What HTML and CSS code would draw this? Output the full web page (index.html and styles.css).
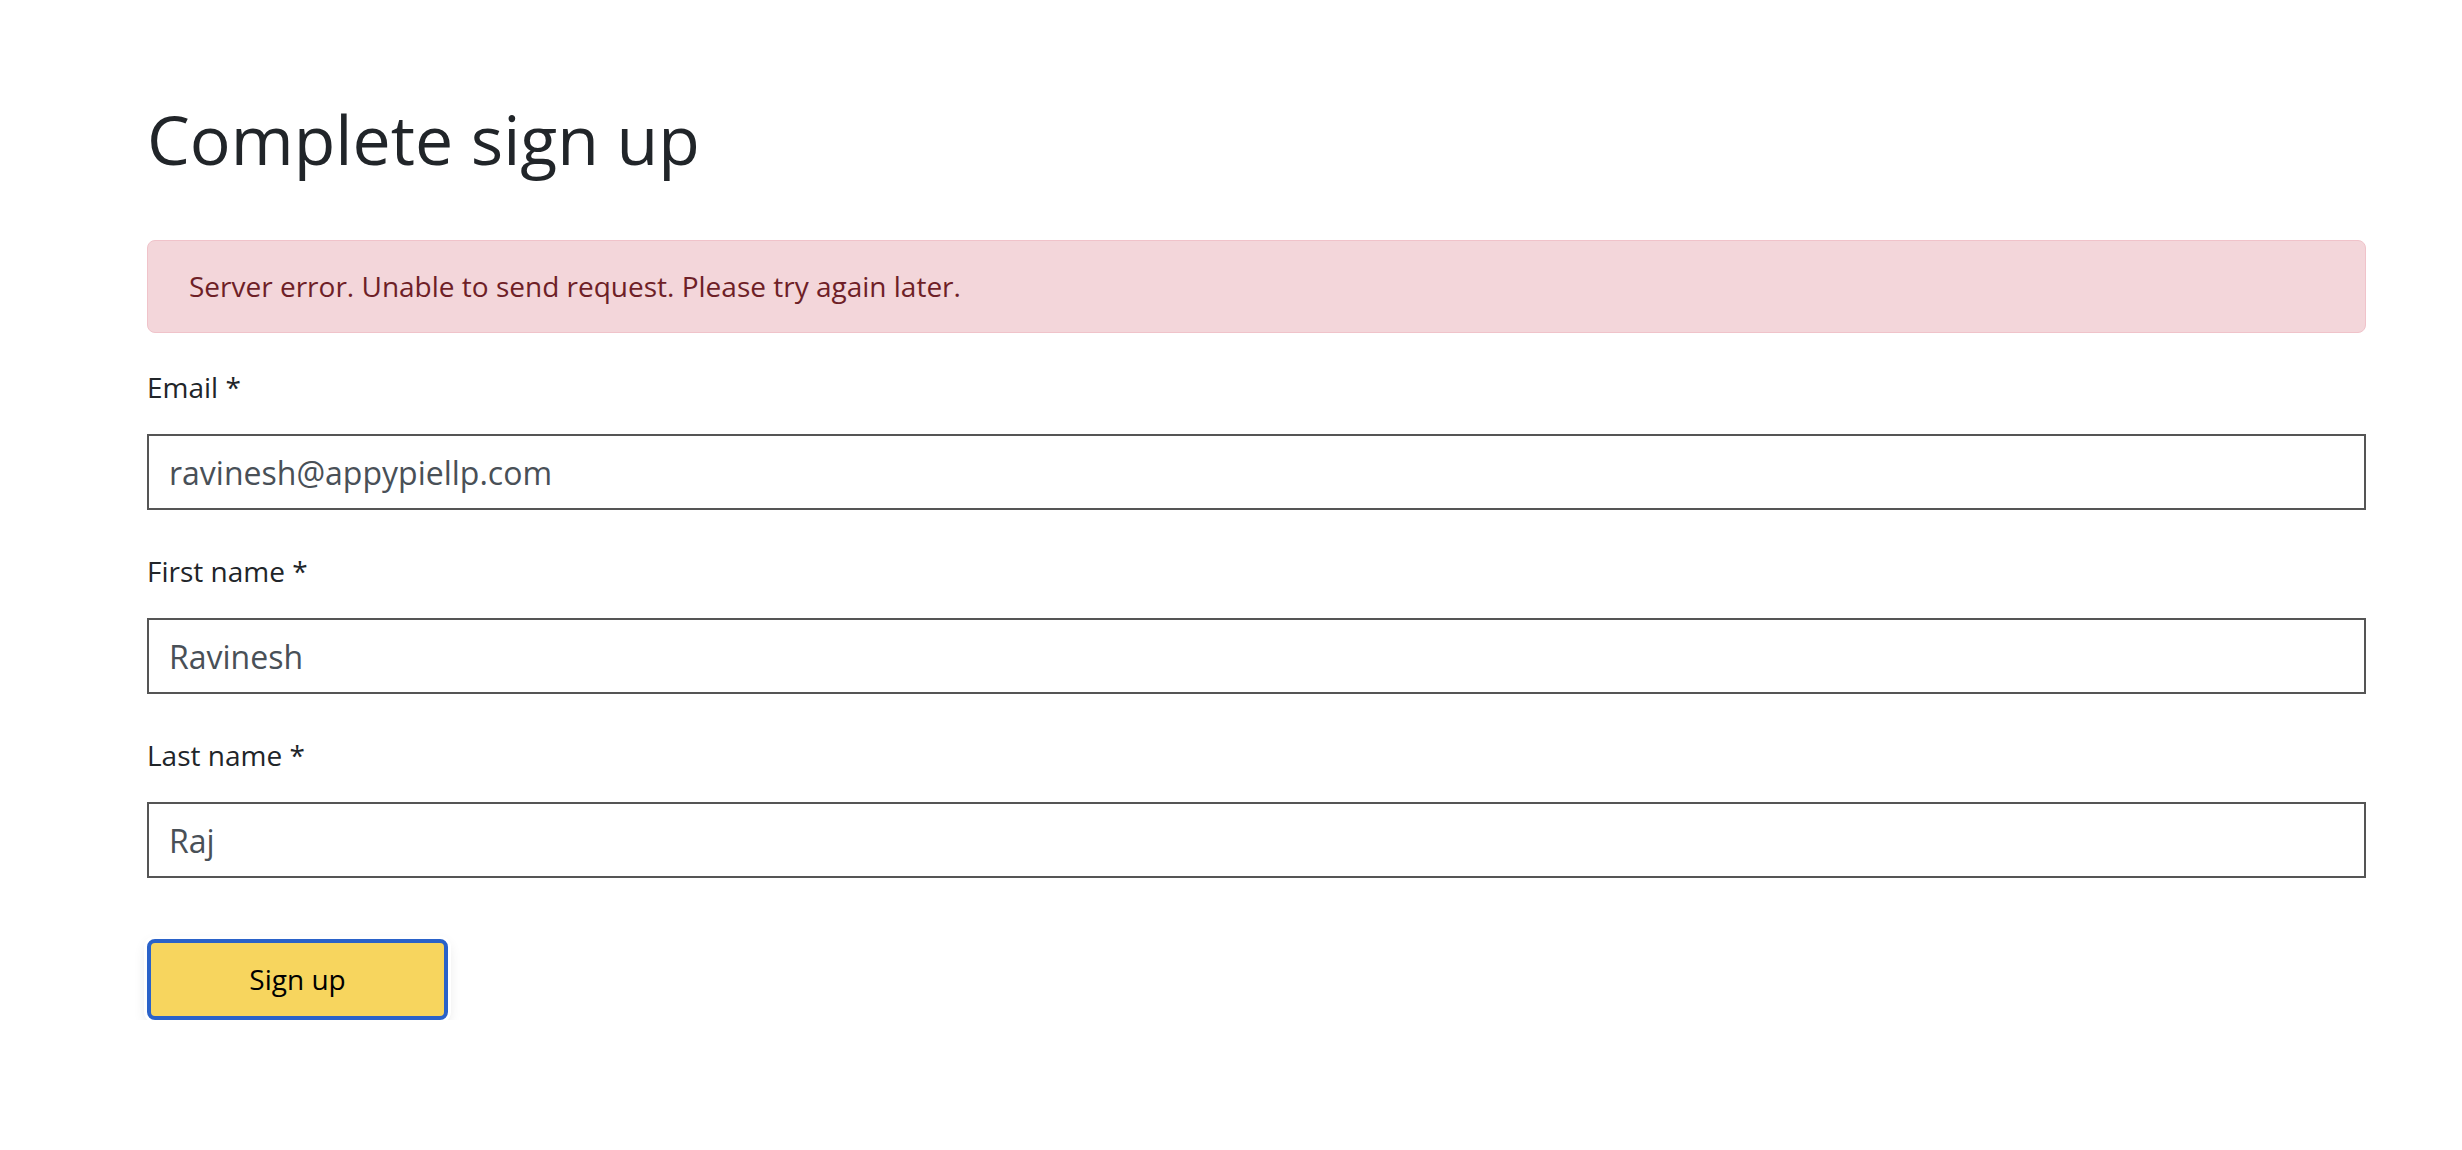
FILE: index.html
```html
<!DOCTYPE html>
<html lang="en">
<head>
<meta charset="utf-8">
<title>Complete sign up</title>
<link rel="stylesheet" href="styles.css">
</head>
<body>
<main class="page">
  <h1 class="title">Complete sign up</h1>
  <div class="alert">Server error. Unable to send request. Please try again later.</div>
  <form class="form">
    <div class="field">
      <label class="label" for="email">Email *</label>
      <input class="input" id="email" type="text" value="ravinesh@appypiellp.com">
    </div>
    <div class="field">
      <label class="label" for="first">First name *</label>
      <input class="input" id="first" type="text" value="Ravinesh">
    </div>
    <div class="field">
      <label class="label" for="last">Last name *</label>
      <input class="input" id="last" type="text" value="Raj">
    </div>
    <button class="btn" type="button">Sign up</button>
  </form>
</main>
</body>
</html>
```

FILE: styles.css
```css
html, body {
  margin: 0;
  padding: 0;
  background: #ffffff;
}

body {
  font-family: "Open Sans", "Noto Sans", sans-serif;
  color: #212529;
}

.page {
  padding: 97px 96px 0 147px;
}

.title {
  margin: 0 0 59px;
  font-size: 68px;
  line-height: 84px;
  font-weight: 400;
  color: #212529;
}

.alert {
  box-sizing: border-box;
  height: 93px;
  padding: 24px 40px 0 41px;
  border: 1px solid #f0c3ca;
  border-radius: 8px;
  background: #f3d6da;
  color: #6e1f27;
  font-size: 28px;
  line-height: 42px;
  margin-bottom: 33px;
}

.form {
  display: flex;
  flex-direction: column;
}

.field {
  display: flex;
  flex-direction: column;
  margin-bottom: 40px;
}

.label {
  font-size: 28px;
  line-height: 42px;
  color: #212529;
  margin-bottom: 26px;
}

.input {
  box-sizing: border-box;
  height: 76px;
  width: 100%;
  margin: 0;
  padding: 0 20px;
  border: 2px solid #555555;
  border-radius: 0;
  background: #ffffff;
  font-family: "Open Sans", "Noto Sans", sans-serif;
  font-size: 32px;
  color: #495057;
  outline: none;
}

.btn {
  box-sizing: border-box;
  align-self: flex-start;
  margin-top: 21px;
  width: 301px;
  height: 81px;
  padding: 0 0 2px;
  border: 4px solid #2a62c9;
  border-radius: 8px;
  background: #f7d55e;
  color: #000000;
  font-family: "Open Sans", "Noto Sans", sans-serif;
  font-size: 28px;
  line-height: 1;
  box-shadow: 0 0 0 3px #ffffff, 0 5px 14px rgba(0, 0, 0, 0.12);
  cursor: pointer;
}
```
